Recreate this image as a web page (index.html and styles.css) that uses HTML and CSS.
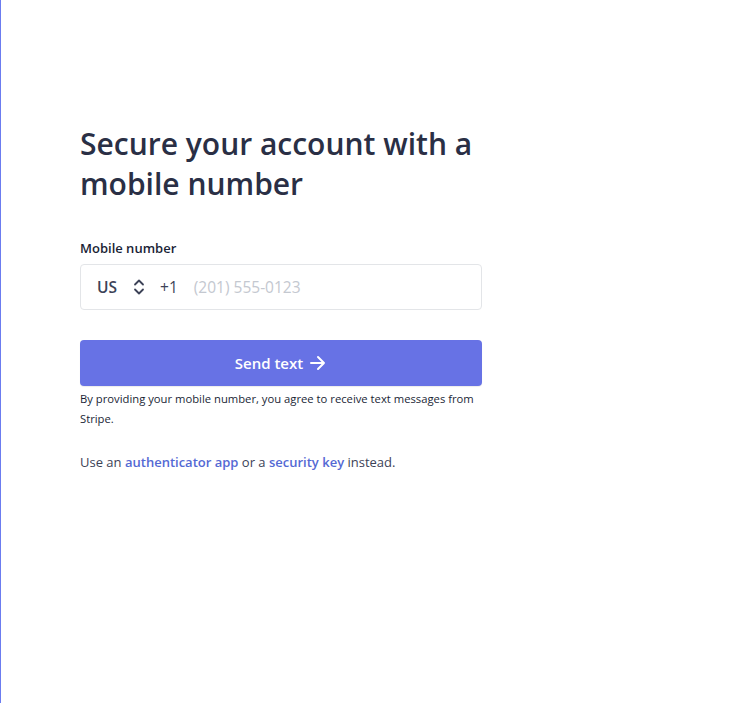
FILE: index.html
```html
<!DOCTYPE html>
<html>
<head>
<meta charset="utf-8">
<link rel="stylesheet" href="styles.css">
</head>
<body>
<div class="page">
  <main class="card">
    <h1 class="title">Secure your account with a mobile number</h1>
    <label class="label">Mobile number</label>
    <div class="field">
      <span class="country">US</span>
      <svg class="chev" width="12" height="18" viewBox="0 0 12 18"><path d="M2 6.5 L6 2.5 L10 6.5 M2 11.5 L6 15.5 L10 11.5" fill="none" stroke="#3c4257" stroke-width="1.8" stroke-linecap="round" stroke-linejoin="round"/></svg>
      <span class="code">+1</span>
      <span class="placeholder">(201) 555-0123</span>
    </div>
    <button class="btn">Send text
      <svg width="18" height="16" viewBox="0 0 18 16"><path d="M2 8 H15 M9 2 L15 8 L9 14" fill="none" stroke="#fff" stroke-width="2" stroke-linecap="round" stroke-linejoin="round"/></svg>
    </button>
    <p class="note">By providing your mobile number, you agree to receive text messages from Stripe.</p>
    <p class="alt">Use an <a href="#">authenticator app</a> or a <a href="#">security key</a> instead.</p>
  </main>
</div>
</body>
</html>
```

FILE: styles.css
```css
html, body {
  margin: 0;
  padding: 0;
  background: #fff;
}
body {
  font-family: "Open Sans", "Noto Sans", sans-serif;
  color: #3c4257;
}
.page {
  min-height: 703px;
  border-left: 1px solid #6b7cf0;
  box-sizing: border-box;
  padding: 124px 0 0 79px;
}
.card {
  width: 402px;
  display: flex;
  flex-direction: column;
}
.title {
  margin: 0;
  font-size: 30px;
  line-height: 40px;
  font-weight: 600;
  color: #2a2f45;
}
.label {
  margin-top: 34px;
  font-size: 13px;
  line-height: 20px;
  font-weight: 600;
  color: #1a1f36;
}
.field {
  margin-top: 6px;
  height: 46px;
  box-sizing: border-box;
  border: 1px solid #e3e5e8;
  border-radius: 4px;
  display: flex;
  align-items: center;
  padding-left: 16px;
  font-size: 15.5px;
}
.country {
  font-weight: 600;
  color: #3c4257;
}
.chev {
  margin-left: 16px;
}
.code {
  margin-left: 15px;
  color: #3c4257;
}
.placeholder {
  margin-left: 16px;
  color: #c4c8d0;
}
.btn {
  margin-top: 30px;
  height: 46px;
  border: 0;
  border-radius: 4px;
  background: #6772e5;
  color: #fff;
  font-family: inherit;
  font-size: 15px;
  font-weight: 600;
  display: flex;
  align-items: center;
  justify-content: center;
  gap: 6px;
  box-shadow: 0 1px 1px rgba(0,0,0,0.08);
}
.note {
  margin: 3px 0 0;
  font-size: 11.25px;
  line-height: 20px;
  color: #1a1f36;
}
.alt {
  margin: 23px 0 0;
  font-size: 13px;
  line-height: 20px;
  color: #3c4257;
}
.alt a {
  color: #5469d4;
  text-decoration: none;
  font-weight: 600;
}
```
